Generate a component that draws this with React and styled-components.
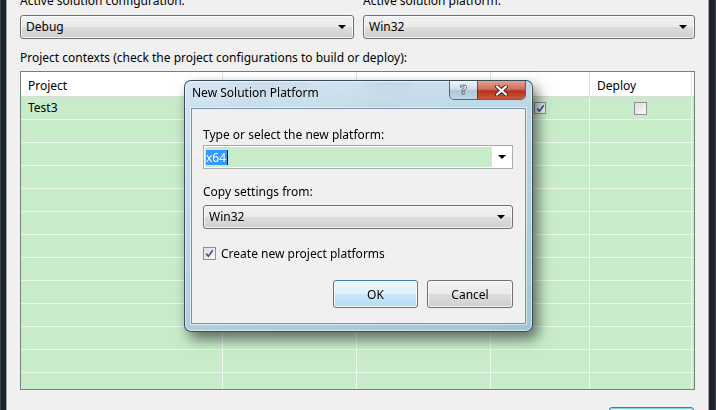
import React from "react";
import styled, { createGlobalStyle, css } from "styled-components";

const GlobalStyle = createGlobalStyle`
  html, body {
    margin: 0;
    padding: 0;
    background: #f0f0f0;
    overflow: hidden;
  }
  body {
    font-family: "Noto Sans", "Open Sans", sans-serif;
    font-size: 12px;
    color: #000;
  }
`;

const Window = styled.div`
  position: relative;
  width: 716px;
  height: 410px;
  display: flex;
  overflow: hidden;
  background: #f0f0f0;
`;

const FrameEdge = styled.div`
  flex: none;
  width: ${({ w }) => w}px;
  background: ${({ side }) =>
    side === "left"
      ? "linear-gradient(to right, #3c424c 0 1px, #1e232b 1px 6px, #9ea4ac 6px)"
      : "linear-gradient(to left, #3c424c 0 1px, #1e232b 1px 7px, #9ea4ac 7px)"};
`;

const Content = styled.div`
  flex: 1;
  min-width: 0;
  margin-top: -7px;
  padding: 0 13px;
  display: flex;
  flex-direction: column;
`;

const TopRow = styled.div`
  display: grid;
  grid-template-columns: 334px 332px;
  column-gap: 9px;
  flex: none;
`;

const Field = styled.div`
  display: flex;
  flex-direction: column;
`;

const Label = styled.div`
  flex: none;
  line-height: 16px;
  height: 16px;
  white-space: nowrap;
  margin-top: ${({ mt }) => mt || 0}px;
`;

const buttonFace = css`
  border: 1px solid #707070;
  border-radius: 3px;
  background: linear-gradient(
    to bottom,
    #f2f2f2 0%,
    #ebebeb 48%,
    #dddddd 52%,
    #cfcfcf 100%
  );
  box-shadow: inset 0 0 0 1px rgba(255, 255, 255, 0.7);
`;

const Combo = styled.div`
  ${buttonFace}
  flex: none;
  box-sizing: border-box;
  height: 24px;
  margin-top: ${({ mt }) => mt || 0}px;
  display: flex;
  align-items: center;
  padding: 0 6px 0 5px;
  line-height: 16px;
`;

const ComboText = styled.span`
  flex: 1;
`;

const Arrow = styled.span`
  width: 0;
  height: 0;
  border-left: 4px solid transparent;
  border-right: 4px solid transparent;
  border-top: 4px solid #000;
  margin-right: ${({ mr }) => mr || 0}px;
`;

const Grid = styled.div`
  flex: none;
  margin-top: 5px;
  height: 319px;
  box-sizing: border-box;
  border: 1px solid #748176;
  overflow: hidden;
  background: #c8ecca;
`;

const cols = "202px 134px 134px 99px 102px 1fr";

const HeaderRow = styled.div`
  display: grid;
  grid-template-columns: ${cols};
  height: 24px;
  overflow: hidden;
  background: #fff;
  border-bottom: 1px solid #d6ddd6;
`;

const HeaderCell = styled.div`
  border-right: 1px solid #e2e2e2;
  padding-left: 7px;
  line-height: 27px;
  white-space: nowrap;
  overflow: hidden;
`;

const Row = styled.div`
  display: grid;
  grid-template-columns: ${cols};
  height: 23px;
  box-sizing: border-box;
  border-bottom: 1px solid #eaf7eb;
`;

const Cell = styled.div`
  border-right: 1px solid #edf8ee;
  line-height: 22px;
  display: flex;
  align-items: center;
  justify-content: ${({ center }) => (center ? "center" : "flex-start")};
  padding-left: ${({ center }) => (center ? 0 : 7)}px;
`;

const Box = styled.span`
  box-sizing: border-box;
  width: ${({ size }) => size}px;
  height: ${({ size }) => size}px;
  border: 1px solid #8e8f8f;
  background: linear-gradient(135deg, #dcdcdc, #fbfbfb);
  display: inline-flex;
  align-items: center;
  justify-content: center;
  flex: none;
`;

const CheckBox = ({ checked, size = 13 }) => (
  <Box size={size}>
    {checked && (
      <svg width="9" height="9" viewBox="0 0 9 9">
        <path
          d="M1.2 4.6 L3.4 7.2 L7.8 1.2"
          fill="none"
          stroke="#3f5494"
          strokeWidth="1.7"
        />
      </svg>
    )}
  </Box>
);

const BottomBar = styled.div`
  flex: none;
  display: flex;
  justify-content: flex-end;
  margin-top: 17px;
  padding-right: 1px;
`;

const DefaultButton = styled.div`
  width: 85px;
  height: 24px;
  box-sizing: border-box;
  border: 1px solid #3c7fb1;
  border-radius: 3px;
  background: linear-gradient(to bottom, #eaf6fd, #d9f0fc 48%, #bee6fd 52%, #a7d9f5);
  box-shadow: inset 0 0 0 1px #7fd3f5;
`;

/* dialog */

const Dialog = styled.div`
  position: absolute;
  left: 184px;
  top: 80px;
  width: 349px;
  height: 252px;
  box-sizing: border-box;
  border: 1px solid rgba(38, 50, 62, 0.85);
  border-radius: 7px;
  background: linear-gradient(
    160deg,
    rgba(210, 228, 242, 0.9),
    rgba(176, 205, 226, 0.9) 60%,
    rgba(156, 194, 216, 0.92)
  );
  backdrop-filter: blur(7px);
  box-shadow: inset 0 0 0 1px rgba(255, 255, 255, 0.55),
    5px 7px 14px rgba(0, 0, 0, 0.55);
  display: flex;
  flex-direction: column;
`;

const TitleBar = styled.div`
  height: 27px;
  display: flex;
  align-items: flex-start;
  flex: none;
`;

const TitleText = styled.div`
  padding: 4px 0 0 7px;
  line-height: 16px;
  flex: 1;
`;

const CaptionGroup = styled.div`
  display: flex;
  margin-right: 6px;
  border: 1px solid rgba(50, 62, 74, 0.75);
  border-top: none;
  border-radius: 0 0 5px 5px;
  overflow: hidden;
`;

const CaptionButton = styled.div`
  height: 18px;
  width: ${({ w }) => w}px;
  display: flex;
  align-items: center;
  justify-content: center;
  ${({ close }) =>
    close
      ? css`
          background: linear-gradient(to bottom, #e2a18f, #cf6f5c 45%, #b8321e 55%, #c9583f);
          border-left: 1px solid rgba(60, 30, 30, 0.6);
        `
      : css`
          background: linear-gradient(to bottom, rgba(255, 255, 255, 0.7), rgba(210, 225, 238, 0.6) 45%, rgba(160, 185, 205, 0.6) 55%, rgba(190, 212, 228, 0.7));
        `}
`;

const HelpGlyph = styled.span`
  font-family: "DejaVu Sans", sans-serif;
  font-size: 13px;
  font-weight: bold;
  color: #fff;
  -webkit-text-stroke: 0.8px #5a6470;
  line-height: 18px;
`;

const Client = styled.div`
  flex: 1;
  margin: 0 6px 7px 6px;
  border: 1px solid #7a93a8;
  box-shadow: 0 0 0 1px rgba(255, 255, 255, 0.55);
  background: #f0f0f0;
  padding: 18px 12px 0 11px;
  display: flex;
  flex-direction: column;
`;

const EditCombo = styled.div`
  box-sizing: border-box;
  height: 24px;
  margin-top: 2px;
  border: 1px solid #abadb3;
  border-top-color: #9ea6b0;
  background: #fff;
  display: flex;
  padding: 1px;
`;

const EditField = styled.div`
  flex: 1;
  background: #c8ecca;
  display: flex;
  align-items: center;
  padding-left: 1px;
`;

const Selected = styled.span`
  background: #3399ff;
  color: #fff;
  line-height: 15px;
  padding: 0 1px 0 0;
  border-right: 1px solid #111;
`;

const ArrowArea = styled.div`
  width: 19px;
  display: flex;
  align-items: center;
  justify-content: center;
`;

const CheckRow = styled.label`
  display: flex;
  align-items: center;
  gap: 5px;
  margin-top: 16px;
  height: 16px;
`;

const ButtonRow = styled.div`
  display: flex;
  justify-content: flex-end;
  gap: 9px;
  margin-top: 19px;
`;

const Button = styled.div`
  box-sizing: border-box;
  width: ${({ w }) => w}px;
  height: 28px;
  display: flex;
  align-items: center;
  justify-content: center;
  ${({ primary }) =>
    primary
      ? css`
          border: 1px solid #3c7fb1;
          border-radius: 3px;
          background: linear-gradient(to bottom, #edf7fd, #def1fb 48%, #c9e8f8 52%, #b6ddf2);
          box-shadow: inset 0 0 0 1px rgba(255, 255, 255, 0.8);
        `
      : buttonFace}
`;

const rows = Array.from({ length: 13 }, (_, i) => i);

export default function App() {
  return (
    <>
      <GlobalStyle />
      <Window>
        <FrameEdge side="left" w={7} />
        <Content>
          <TopRow>
            <Field>
              <Label>Active solution configuration:</Label>
              <Combo mt={6}>
                <ComboText>Debug</ComboText>
                <Arrow mr={1} />
              </Combo>
            </Field>
            <Field>
              <Label>Active solution platform:</Label>
              <Combo mt={6}>
                <ComboText>Win32</ComboText>
                <Arrow mr={1} />
              </Combo>
            </Field>
          </TopRow>
          <Label mt={11}>
            Project contexts (check the project configurations to build or deploy):
          </Label>
          <Grid>
            <HeaderRow>
              <HeaderCell>Project</HeaderCell>
              <HeaderCell>Configuration</HeaderCell>
              <HeaderCell>Platform</HeaderCell>
              <HeaderCell>Build</HeaderCell>
              <HeaderCell>Deploy</HeaderCell>
              <HeaderCell />
            </HeaderRow>
            {rows.map((i) =>
              i === 0 ? (
                <Row key={i}>
                  <Cell>Test3</Cell>
                  <Cell>Debug</Cell>
                  <Cell>Win32</Cell>
                  <Cell center>
                    <CheckBox checked size={12} />
                  </Cell>
                  <Cell center>
                    <CheckBox size={13} />
                  </Cell>
                  <Cell />
                </Row>
              ) : (
                <Row key={i}>
                  <Cell />
                  <Cell />
                  <Cell />
                  <Cell />
                  <Cell />
                  <Cell />
                </Row>
              )
            )}
          </Grid>
          <BottomBar>
            <DefaultButton />
          </BottomBar>
        </Content>
        <FrameEdge side="right" w={8} />

        <Dialog>
          <TitleBar>
            <TitleText>New Solution Platform</TitleText>
            <CaptionGroup>
              <CaptionButton w={27}>
                <HelpGlyph>?</HelpGlyph>
              </CaptionButton>
              <CaptionButton w={47} close>
                <svg width="13" height="11" viewBox="0 0 13 11">
                  <path
                    d="M2 1.5 L11 9.5 M11 1.5 L2 9.5"
                    stroke="#4a2020"
                    strokeWidth="4"
                    strokeLinecap="round"
                  />
                  <path
                    d="M2 1.5 L11 9.5 M11 1.5 L2 9.5"
                    stroke="#fff"
                    strokeWidth="2.2"
                    strokeLinecap="round"
                  />
                </svg>
              </CaptionButton>
            </CaptionGroup>
          </TitleBar>
          <Client>
            <Label>Type or select the new platform:</Label>
            <EditCombo>
              <EditField>
                <Selected>x64</Selected>
              </EditField>
              <ArrowArea>
                <Arrow />
              </ArrowArea>
            </EditCombo>
            <Label mt={15}>Copy settings from:</Label>
            <Combo mt={5}>
              <ComboText>Win32</ComboText>
              <Arrow mr={1} />
            </Combo>
            <CheckRow>
              <CheckBox checked size={13} />
              Create new project platforms
            </CheckRow>
            <ButtonRow>
              <Button primary w={85}>
                OK
              </Button>
              <Button w={86}>Cancel</Button>
            </ButtonRow>
          </Client>
        </Dialog>
      </Window>
    </>
  );
}
